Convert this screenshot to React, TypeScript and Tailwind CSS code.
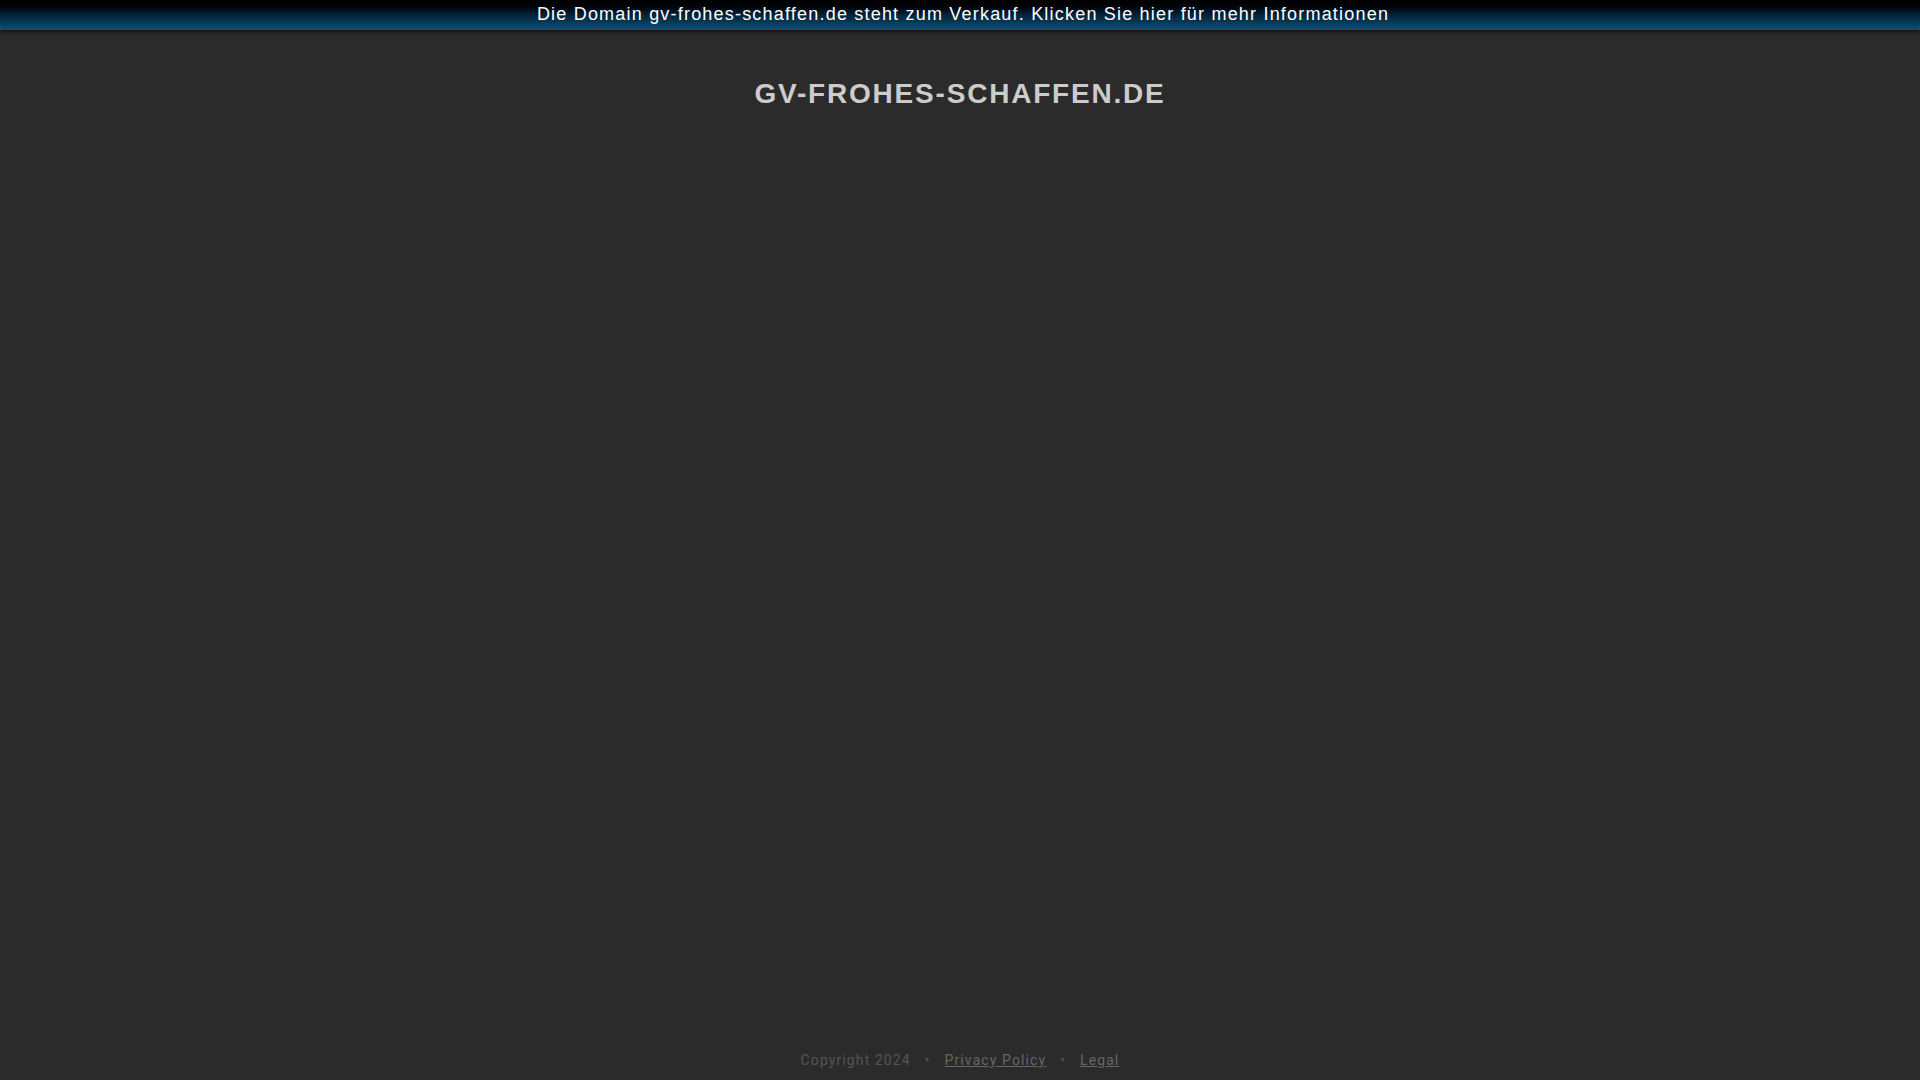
import React from "react";

export default function App() {
  return (
    <div className="min-h-screen w-full bg-[#2b2b2b] flex flex-col" style={{ fontFamily: '"Liberation Sans", Arial, sans-serif' }}>
      <div className="h-[30px] w-full bg-gradient-to-b from-[#000000] via-[#03233a] to-[#0b5474] shadow-[0_2px_4px_rgba(0,0,0,0.6)] flex items-center justify-center relative z-10">
        <a className="text-white text-[18px] tracking-[1.2px] leading-none cursor-pointer -mt-[2px] ml-[6px]">
          Die Domain gv-frohes-schaffen.de steht zum Verkauf. Klicken Sie hier für mehr Informationen
        </a>
      </div>
      <div className="flex justify-center pt-[48px]">
        <h1 className="text-[28px] font-bold tracking-[1.8px] text-[#cccccc] leading-[32px]">GV-FROHES-SCHAFFEN.DE</h1>
      </div>
      <div className="flex-1" />
      <div className="flex justify-center items-center pb-[9px] text-[14px] tracking-[1.1px] text-[#555555]" style={{ fontFamily: 'Roboto, "Liberation Sans", sans-serif' }}>
        <span>Copyright 2024</span>
        <span className="mx-[14px]">•</span>
        <a className="underline text-[#666666]">Privacy Policy</a>
        <span className="mx-[14px]">•</span>
        <a className="underline text-[#666666]">Legal</a>
      </div>
    </div>
  );
}
